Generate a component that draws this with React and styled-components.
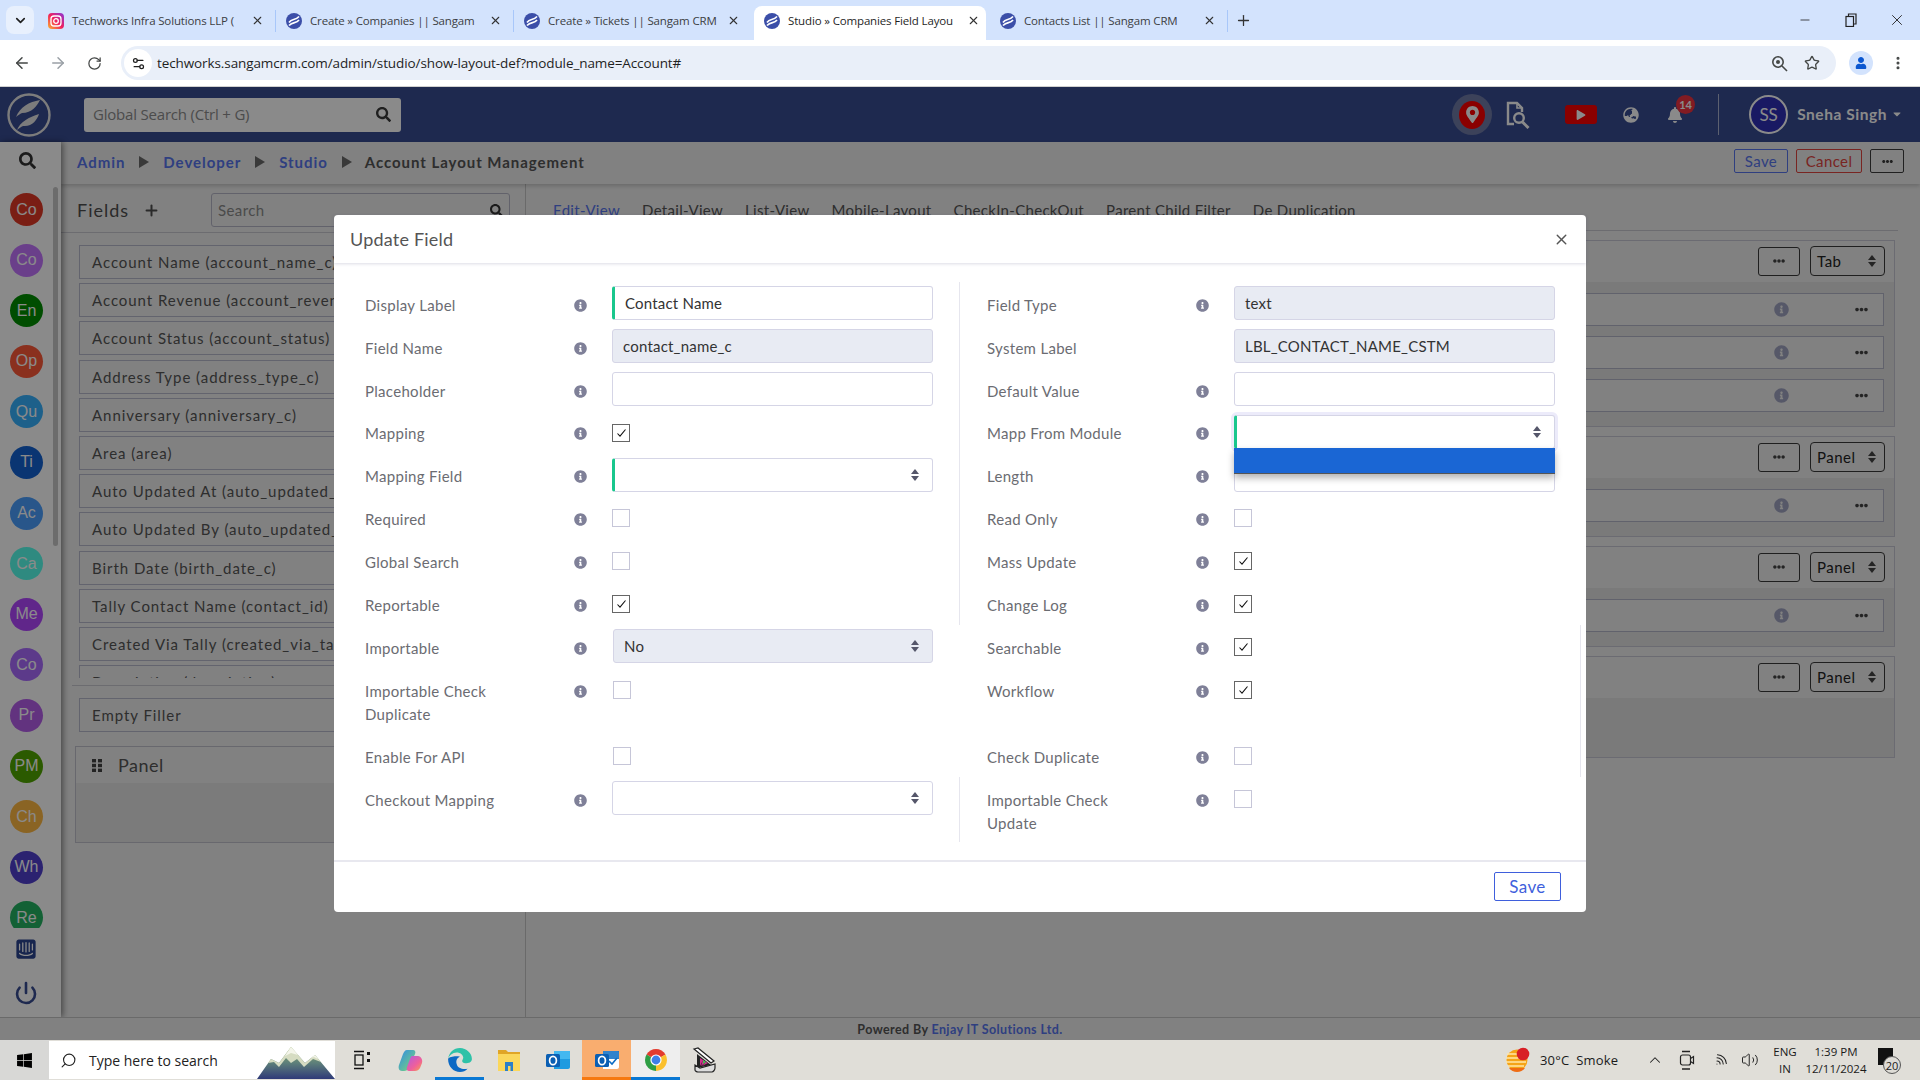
import React from 'react';
import styled, { createGlobalStyle } from 'styled-components';
import {
  ArrowLeft, ArrowRight, RotateCw, Star, Search, EllipsisVertical, Minus, X, Plus,
  ChevronDown, ChevronUp, Settings2, Power, Volume2, Wifi,
} from 'lucide-react';
import {
  FaUser, FaSearch, FaMapMarkerAlt, FaPlay, FaGlobeAsia, FaBell, FaEllipsisH, FaInfoCircle,
  FaIntercom, FaWindows, FaCaretDown,
} from 'react-icons/fa';

const GlobalStyle = createGlobalStyle`
  html, body {
    margin: 0;
    padding: 0;
    width: 1920px;
    height: 1080px;
    overflow: hidden;
    background: #fff;
  }
  * {
    box-sizing: border-box;
  }
`;

const uiFont = `'Open Sans', 'Noto Sans', sans-serif`;
const appFont = `Lato, 'Open Sans', sans-serif`;

const Screen = styled.div`
  width: 1920px;
  height: 1080px;
  display: flex;
  flex-direction: column;
`;

/* ---------- browser chrome ---------- */

const TabStrip = styled.div`
  height: 40px;
  flex: none;
  background: #d3e3fd;
  display: flex;
  align-items: flex-end;
  padding-left: 6px;
  font-family: ${uiFont};
`;

const TabListButton = styled.div`
  width: 28px;
  height: 28px;
  margin: 0 4px 6px 0;
  border-radius: 8px;
  background: #e8f0fd;
  color: #1f1f1f;
  display: flex;
  align-items: center;
  justify-content: center;
`;

const Tab = styled.div`
  width: ${(p) => (p.$active ? '232px' : '238px')};
  height: 34px;
  margin: ${(p) => (p.$active ? '0 4px 0 2px' : '0')};
  padding: 0 0 5px 10px;
  display: flex;
  align-items: center;
  background: ${(p) => (p.$active ? '#fff' : 'transparent')};
  border-radius: 8px 8px 0 0;
`;

const TabTitle = styled.span`
  margin-left: 8px;
  width: 168px;
  white-space: nowrap;
  font-size: 11.5px;
  letter-spacing: -0.15px;
  color: ${(p) => (p.$active ? '#1f1f1f' : '#3c4043')};
`;

const TabClose = styled.span`
  margin-left: 10px;
  width: 14px;
  display: flex;
  justify-content: center;
  color: #333;
`;

const TabSep = styled.span`
  margin-left: auto;
  width: 1px;
  height: 22px;
  background: ${(p) => (p.$hidden ? 'transparent' : '#a8c7fa')};
`;

const NewTab = styled.div`
  margin: 0 0 11px 7px;
  color: #333;
  display: flex;
`;

const WindowControls = styled.div`
  margin-left: auto;
  height: 40px;
  display: flex;
`;

const WindowButton = styled.div`
  width: 46px;
  display: flex;
  align-items: center;
  justify-content: center;
  color: #222;
`;

const AddressRow = styled.div`
  height: 47px;
  flex: none;
  background: #fff;
  border-bottom: 1px solid #d0d0d0;
  display: flex;
  align-items: center;
  padding: 0 14px 0 4px;
  font-family: ${uiFont};
`;

const NavButton = styled.div`
  width: 36px;
  display: flex;
  justify-content: center;
  color: ${(p) => (p.$muted ? '#9aa0a6' : '#444746')};
`;

const Omnibox = styled.div`
  width: 1715px;
  height: 34px;
  margin-left: 9px;
  padding: 0 16px 0 3px;
  border-radius: 17px;
  background: #e9eff9;
  display: flex;
  align-items: center;
  color: #1f1f1f;
`;

const SiteInfo = styled.div`
  width: 28px;
  height: 28px;
  border-radius: 50%;
  background: #fff;
  display: flex;
  align-items: center;
  justify-content: center;
`;

const Url = styled.span`
  margin-left: 5px;
  font-size: 13.5px;
  letter-spacing: -0.1px;
  color: #1f1f1f;
`;

const OmniIcons = styled.div`
  margin-left: auto;
  display: flex;
  align-items: center;
  gap: 16px;
  color: #444746;
`;

const Profile = styled.div`
  width: 24px;
  height: 24px;
  margin-left: 13px;
  border-radius: 50%;
  background: #d3e3fd;
  color: #0b57d0;
  display: flex;
  align-items: center;
  justify-content: center;
`;

const ChromeMenu = styled.div`
  margin-left: 17px;
  display: flex;
  color: #444746;
`;

/* ---------- app shell, all of it under the modal backdrop ---------- */

const Viewport = styled.div`
  flex: 1;
  min-height: 0;
  position: relative;
  display: flex;
  flex-direction: column;
  background: #eeeeee;
  font-family: ${appFont};
`;

const AppHeader = styled.header`
  height: 55px;
  flex: none;
  background: #384c92;
  display: flex;
  align-items: center;
  padding-left: 7px;
`;

const GlobalSearch = styled.div`
  width: 317px;
  height: 34px;
  margin-left: 33px;
  padding: 0 10px 1px 9px;
  border-radius: 3px;
  background: #fff;
  display: flex;
  align-items: center;
  justify-content: space-between;
  font-size: 15px;
  color: #8d8d8d;
  font-family: ${uiFont};
  letter-spacing: -0.2px;
  svg {
    color: #3a3a3a;
  }
`;

const HeaderRight = styled.div`
  margin-left: auto;
  display: flex;
  align-items: center;
  color: #fff;
`;

const PinHalo = styled.div`
  width: 40px;
  height: 41px;
  border-radius: 50%;
  background: #6f7aa6;
  display: flex;
  align-items: center;
  justify-content: center;
`;

const PinDisc = styled.div`
  width: 26px;
  height: 28px;
  border-radius: 50%;
  background: #ff0000;
  display: flex;
  align-items: center;
  justify-content: center;
`;

const HeaderIcon = styled.div`
  margin-left: ${(p) => p.$ml}px;
  position: relative;
  display: flex;
`;

const PlayButton = styled.div`
  width: 32px;
  height: 19px;
  margin-left: 35px;
  border-radius: 3px;
  background: #ff0000;
  display: flex;
  align-items: center;
  justify-content: center;
`;

const Badge = styled.span`
  position: absolute;
  top: -12px;
  left: 9px;
  width: 19px;
  height: 19px;
  border-radius: 50%;
  background: #f0323f;
  color: #fff;
  font-size: 11px;
  font-weight: 700;
  display: flex;
  align-items: center;
  justify-content: center;
`;

const HeaderDivider = styled.span`
  width: 1px;
  height: 41px;
  margin-left: 35px;
  background: #aab2d0;
`;

const UserAvatar = styled.div`
  width: 39px;
  height: 39px;
  margin-left: 30px;
  border-radius: 50%;
  border: 2px solid #fff;
  background: #2f2fb8;
  color: #fff;
  font-size: 17px;
  display: flex;
  align-items: center;
  justify-content: center;
`;

const UserName = styled.div`
  margin: 0 17px 1px 9px;
  display: flex;
  align-items: center;
  gap: 4px;
  font-size: 15.5px;
  font-weight: 700;
  letter-spacing: 0.55px;
  color: #fff;
`;

const Workspace = styled.div`
  flex: 1;
  min-height: 0;
  display: flex;
`;

const Sidebar = styled.aside`
  width: 61px;
  flex: none;
  position: relative;
  z-index: 2;
  background: #fff;
  box-shadow: 2px 0 6px rgba(0, 0, 0, 0.45);
  display: flex;
  flex-direction: column;
`;

const SideSearch = styled.div`
  height: 42px;
  flex: none;
  padding: 0 0 6px 19px;
  display: flex;
  align-items: center;
  color: #333;
`;

const AvatarList = styled.div`
  height: 744px;
  flex: none;
  overflow: hidden;
  padding: 9px 0 0 10px;
  display: flex;
  flex-direction: column;
  gap: 17.6px;
`;

const ScrollThumb = styled.span`
  position: absolute;
  left: 53px;
  top: 45px;
  width: 5px;
  height: 359px;
  border-radius: 3px;
  background: #c8c8c8;
`;

const Avatar = styled.div`
  width: 33px;
  height: 33px;
  flex: none;
  border-radius: 50%;
  background: ${(p) => p.$bg};
  color: #fff;
  font-family: 'Liberation Sans', sans-serif;
  font-size: 16px;
  display: flex;
  align-items: center;
  justify-content: center;
`;

const SideBottom = styled.div`
  display: flex;
  flex-direction: column;
  align-items: center;
  width: 52px;
  padding-top: 10px;
  gap: 21px;
  color: #384c92;
`;

const Main = styled.main`
  flex: 1;
  min-width: 0;
  display: flex;
  flex-direction: column;
`;

const Crumbs = styled.div`
  height: 42px;
  flex: none;
  padding: 0 16px 2px 16px;
  background: #eeeeee;
  box-shadow: 0 2px 4px rgba(0, 0, 0, 0.18);
  position: relative;
  z-index: 1;
  display: flex;
  align-items: center;
  font-size: 15px;
  font-weight: 700;
  letter-spacing: 0.95px;
`;

const CrumbLink = styled.span`
  color: #5775ed;
`;

const CrumbSep = styled.span`
  width: 0;
  height: 0;
  margin: 0 14px 0 14px;
  border-top: 6px solid transparent;
  border-bottom: 6px solid transparent;
  border-left: 10px solid #6a6a6a;
`;

const CrumbCurrent = styled.span`
  margin-left: -1px;
  color: #555;
`;

const TopActions = styled.div`
  margin: 0 0 2px auto;
  display: flex;
  gap: 8px;
`;

const TopButton = styled.div`
  height: 24px;
  width: ${(p) => p.$w}px;
  border: 1px solid ${(p) => p.$c};
  border-radius: 2px;
  color: ${(p) => p.$c};
  font-size: 15px;
  font-weight: 400;
  letter-spacing: 0.4px;
  display: flex;
  align-items: center;
  justify-content: center;
`;

const Studio = styled.div`
  flex: 1;
  min-height: 0;
  display: flex;
`;

const FieldsPane = styled.section`
  width: 465px;
  flex: none;
  border-right: 1px solid #c4c4c4;
  display: flex;
  flex-direction: column;
`;

const FieldsHead = styled.div`
  height: 49px;
  flex: none;
  padding: 4px 15px 0 16px;
  border-bottom: 1px solid #c8c8d0;
  display: flex;
  align-items: center;
  color: #4e4e4e;
`;

const FieldsTitle = styled.span`
  font-size: 18px;
  font-weight: 400;
  letter-spacing: 1px;
`;

const AddField = styled.span`
  margin-left: 14px;
  display: flex;
`;

const FieldSearch = styled.div`
  width: 299px;
  height: 34px;
  margin-left: auto;
  padding: 0 6px;
  border: 1px solid #b5b5c6;
  border-radius: 3px;
  display: flex;
  align-items: center;
  justify-content: space-between;
  font-size: 15px;
  letter-spacing: 0.4px;
  color: #8a8a8a;
  svg {
    color: #333;
  }
`;

const FieldList = styled.div`
  height: 433px;
  flex: none;
  margin: 12px 0 0 18px;
  overflow: hidden;
  display: flex;
  flex-direction: column;
  gap: 4.2px;
`;

const FieldItem = styled.div`
  height: 34px;
  width: 430px;
  flex: none;
  padding-left: 12px;
  border: 1px solid #b8bacb;
  display: flex;
  align-items: center;
  font-size: 15px;
  letter-spacing: 0.95px;
  white-space: nowrap;
  color: #555;
`;

const FillerBlock = styled.div`
  margin: 7px 16px 0 11px;
  padding: 12px 0 0 7px;
  border-top: 1px solid #c8c8d0;
`;

const PanelDraft = styled.div`
  height: 97px;
  margin: 14px 16px 0 14px;
  border: 1px solid #c0c0cc;
  background: #e4e4e4;
  display: flex;
  flex-direction: column;
`;

const PanelDraftHead = styled.div`
  height: 36px;
  flex: none;
  padding-left: 16px;
  background: #eeeeee;
  display: flex;
  align-items: center;
  gap: 16px;
  font-size: 18px;
  letter-spacing: 0.5px;
  color: #555;
`;

const ViewArea = styled.section`
  flex: 1;
  min-width: 0;
  display: flex;
  flex-direction: column;
`;

const ViewTabs = styled.nav`
  height: 47px;
  flex: none;
  margin-right: 22px;
  padding: 17px 0 0 27px;
  border-bottom: 1px solid #c8c8d0;
  display: flex;
  font-size: 15px;
  letter-spacing: 0.31px;
  color: #555;
`;

const ViewTab = styled.span`
  height: 24px;
  margin-right: ${(p) => p.$mr}px;
  color: ${(p) => (p.$active ? '#5775ed' : '#555')};
`;

const PanelStack = styled.div`
  margin: 9px 25px 0 14px;
  display: flex;
  flex-direction: column;
  gap: 9px;
`;

const LayoutPanel = styled.div`
  border: 1px solid #c6c6d2;
  background: #e2e2e2;
  padding-bottom: ${(p) => p.$pb}px;
  min-height: ${(p) => p.$min || 0}px;
`;

const LayoutHead = styled.div`
  height: 41px;
  padding: 0 9px 1px 0;
  background: #eeeeee;
  display: flex;
  align-items: center;
  justify-content: flex-end;
  gap: 10px;
`;

const GhostButton = styled.div`
  width: 42px;
  height: 29px;
  border: 1px solid #3a3a3a;
  border-radius: 3px;
  color: #444;
  display: flex;
  align-items: center;
  justify-content: center;
`;

const PanelSelect = styled.div`
  width: 75px;
  height: 30px;
  padding: 0 8px 0 6px;
  border: 1px solid #3a3a3a;
  border-radius: 4px;
  font-size: 15px;
  letter-spacing: 0.5px;
  color: #222;
  display: flex;
  align-items: center;
  justify-content: space-between;
`;

const RowStack = styled.div`
  margin: 11px 10px 0 10px;
  display: flex;
  flex-direction: column;
  gap: 10px;
`;

const LayoutRow = styled.div`
  height: 33px;
  padding-right: 15px;
  border: 1px solid #b4b6c8;
  background: #eeeeee;
  display: flex;
  align-items: center;
  justify-content: flex-end;
  gap: 66px;
  color: #9fa3c0;
  .dots {
    color: #444;
  }
`;

const AppFooter = styled.footer`
  height: 23px;
  flex: none;
  border-top: 1px solid #c4c4c4;
  background: #eeeeee;
  display: flex;
  align-items: center;
  justify-content: center;
  font-size: 12.5px;
  font-weight: 700;
  letter-spacing: 0.4px;
  color: #555;
  position: relative;
  z-index: 3;
  span {
    color: #5775ed;
    margin-left: 3px;
  }
`;

/* ---------- modal ---------- */

const Backdrop = styled.div`
  position: absolute;
  inset: 0;
  z-index: 10;
  background: rgba(0, 0, 0, 0.46);
  display: flex;
  justify-content: center;
  padding-top: 128px;
`;

const Modal = styled.div`
  width: 1252px;
  height: 697px;
  border-radius: 4px;
  background: #fff;
  display: flex;
  flex-direction: column;
`;

const ModalHead = styled.div`
  height: 48px;
  flex: none;
  padding: 0 16px 0 16px;
  box-shadow: 0 1px 3px rgba(60, 60, 110, 0.18);
  display: flex;
  align-items: center;
  justify-content: space-between;
  font-size: 18px;
  letter-spacing: 0.2px;
  color: #555;
  svg {
    color: #555;
  }
`;

const FormGrid = styled.div`
  margin: 19px 0 0 3px;
  display: grid;
  grid-template-columns: 622px 622px;
  grid-template-rows: repeat(4, 43px) 42px repeat(4, 43px) 66px 43px 65px;
`;

const Cell = styled.div`
  padding: 0 25px 0 27px;
  border-left: 1px solid ${(p) => (p.$line === 'left' ? '#e6e6ee' : 'transparent')};
  border-right: 1px solid ${(p) => (p.$line === 'right' ? '#e6e6ee' : 'transparent')};
  display: grid;
  grid-template-columns: 209px 38px 321px;
  align-items: start;
`;

const Label = styled.label`
  padding: ${(p) => (p.$up ? '11px' : '12px')} 40px 0 0;
  font-size: 15px;
  line-height: 23px;
  letter-spacing: 0.3px;
  color: #6b6c72;
`;

const InfoSlot = styled.span`
  margin-top: ${(p) => (p.$up ? '16px' : '17px')};
  display: flex;
  color: #7f8098;
`;

const Field = styled.div`
  height: 34px;
  margin: 4px 0 0 ${(p) => (p.$nudge ? '1px' : '0')};
  padding: 0 13px 0 10px;
  border: 1px solid #d5d5e6;
  border-left: ${(p) => (p.$accent ? '3px solid #19c78d' : '1px solid #d5d5e6')};
  border-radius: 3px;
  background: ${(p) => (p.$disabled ? '#e8ebf3' : '#fff')};
  font-size: 15px;
  letter-spacing: 0.2px;
  color: #333;
  display: flex;
  align-items: center;
  position: relative;
  box-shadow: ${(p) => (p.$focused ? '0 0 0 3px #ecebfa' : 'none')};
`;

const Arrows = styled.span`
  margin-left: auto;
  display: flex;
  flex-direction: column;
  gap: 2px;
  &::before,
  &::after {
    content: '';
    width: 0;
    height: 0;
    border-left: 4.5px solid transparent;
    border-right: 4.5px solid transparent;
  }
  &::before {
    border-bottom: 5px solid ${(p) => p.$c || '#55566a'};
  }
  &::after {
    border-top: 5px solid ${(p) => p.$c || '#55566a'};
  }
`;

const OptionList = styled.div`
  position: absolute;
  left: -3px;
  right: -1px;
  top: 32px;
  height: 26px;
  z-index: 2;
  background: #1a66d4;
  border-bottom: 1px solid #555;
  box-shadow: 0 4px 7px rgba(0, 0, 0, 0.3);
`;

const Check = styled.span`
  width: 18px;
  height: 18px;
  margin: 13px 0 0 ${(p) => (p.$nudge ? '1px' : '0')};
  border: 1px solid ${(p) => (p.$on ? '#666' : '#c6c6d8')};
  background: #fff;
  display: flex;
  align-items: center;
  justify-content: center;
  color: #111;
`;

const ModalFoot = styled.div`
  margin-top: 18px;
  flex: 1;
  border-top: 2px solid #e8e8ef;
  padding: 10px 25px 0 0;
  display: flex;
  justify-content: flex-end;
  align-items: flex-start;
`;

const SaveButton = styled.div`
  width: 67px;
  height: 29px;
  border: 1px solid #3f5fdc;
  border-radius: 2px;
  color: #3f5fdc;
  font-size: 17px;
  letter-spacing: 0.4px;
  display: flex;
  align-items: center;
  justify-content: center;
`;

/* ---------- taskbar ---------- */

const Taskbar = styled.div`
  height: 40px;
  flex: none;
  background: #e0ded8;
  display: flex;
  font-family: ${uiFont};
  color: #1a1a1a;
`;

const StartButton = styled.div`
  width: 49px;
  padding-left: 16px;
  background: #d8d8d6;
  display: flex;
  align-items: center;
`;

const SearchBox = styled.div`
  width: 286px;
  margin: 1px 0;
  padding-left: 11px;
  background: #fff;
  display: flex;
  align-items: center;
  font-size: 14px;
  color: #222;
  position: relative;
  overflow: hidden;
  svg.glass {
    transform: scaleX(-1);
    margin-right: 12px;
  }
`;

const Peaks = styled.svg`
  position: absolute;
  right: 0;
  bottom: 0;
`;

const TaskApps = styled.div`
  margin-left: 2px;
  display: flex;
`;

const TaskItem = styled.div`
  width: 49px;
  display: flex;
  align-items: center;
  justify-content: center;
  background: ${(p) => p.$bg || 'transparent'};
  border-bottom: 3px solid ${(p) => p.$line || 'transparent'};
  border-top: 3px solid transparent;
`;

const Tray = styled.div`
  margin-left: auto;
  width: 414px;
  display: flex;
  align-items: center;
  font-size: 13px;
`;

const TrayIcon = styled.div`
  width: ${(p) => p.$w || 30}px;
  margin-left: ${(p) => p.$ml || 0}px;
  display: flex;
  justify-content: center;
  color: #222;
`;

const Weather = styled.span`
  width: 80px;
  margin-left: 10px;
  white-space: nowrap;
  letter-spacing: 0.15px;
`;

const TrayStack = styled.div`
  width: ${(p) => p.$w}px;
  margin-left: ${(p) => p.$ml}px;
  display: flex;
  flex-direction: column;
  align-items: center;
  gap: 1px;
  font-size: 11.5px;
  line-height: 16px;
  white-space: nowrap;
`;

const Notify = styled.div`
  margin-left: 7px;
  position: relative;
  width: 24px;
  height: 26px;
`;

const NotifyBubble = styled.span`
  position: absolute;
  left: 2px;
  top: 1px;
  width: 15px;
  height: 17px;
  background: #111;
`;

const NotifyCount = styled.span`
  position: absolute;
  left: 7px;
  top: 9px;
  width: 18px;
  height: 18px;
  border-radius: 50%;
  border: 1px solid #555;
  background: #dedcd6;
  font-size: 11px;
  display: flex;
  align-items: center;
  justify-content: center;
`;

/* ---------- drawings ---------- */

const SangamIcon = () => (
  <svg width="16" height="16" viewBox="0 0 16 16">
    <circle cx="8" cy="8" r="8" fill="#3b4ea8" />
    <path d="M3 9.5C6 5 9 8 13 3.5M3 12.5C7 8 10 11 13 7" stroke="#fff" strokeWidth="1.7" fill="none" />
  </svg>
);

const InstaIcon = () => (
  <svg width="16" height="16" viewBox="0 0 16 16">
    <defs>
      <linearGradient id="ig" x1="0" y1="1" x2="1" y2="0">
        <stop offset="0" stopColor="#fdb42d" />
        <stop offset="0.5" stopColor="#f0205f" />
        <stop offset="1" stopColor="#8a36d8" />
      </linearGradient>
    </defs>
    <rect width="16" height="16" rx="4" fill="url(#ig)" />
    <rect x="3" y="3" width="10" height="10" rx="3" fill="none" stroke="#fff" strokeWidth="1.3" />
    <circle cx="8" cy="8" r="2.3" fill="none" stroke="#fff" strokeWidth="1.3" />
  </svg>
);

const RestoreIcon = () => (
  <svg width="12" height="14" viewBox="0 0 12 14" fill="none" stroke="#222" strokeWidth="1.2">
    <rect x="1" y="3.5" width="7.5" height="10" />
    <path d="M3.5 3.5V1H11V11H8.5" />
  </svg>
);

const ZoomLens = () => (
  <svg width="17" height="17" viewBox="0 0 17 17" fill="none" stroke="currentColor" strokeWidth="1.6">
    <circle cx="7" cy="7" r="5.2" />
    <circle cx="7" cy="7" r="2" fill="currentColor" stroke="none" />
    <path d="M11 11l5 5" />
  </svg>
);

const AppLogo = () => (
  <svg width="44" height="44" viewBox="0 0 44 44">
    <circle cx="22" cy="22" r="20.5" fill="none" stroke="#e6e6e6" strokeWidth="2.4" />
    <path d="M9 24C13 14 22 9 33 7 30 13 25 20 15 20 13 21 11 22 9 24z" fill="#e6e6e6" />
    <path d="M10 37C13 29 22 24 32 21 30 27 25 34 16 33 14 34 12 35 10 37z" fill="#e6e6e6" />
  </svg>
);

const DocSearchIcon = () => (
  <svg width="24" height="28" viewBox="0 0 24 28" fill="none" stroke="#fff" strokeWidth="2.4">
    <path d="M8 23H2V2h9l5 5v4" />
    <path d="M11 2v5h5" strokeWidth="1.6" />
    <circle cx="13" cy="17" r="4.8" />
    <path d="M16.5 21l6 6" strokeWidth="3" />
  </svg>
);

const GripDots = () => (
  <svg width="10" height="13" viewBox="0 0 10 13" fill="#444">
    <rect width="4" height="3.4" />
    <rect x="6" width="4" height="3.4" />
    <rect y="4.8" width="4" height="3.4" />
    <rect x="6" y="4.8" width="4" height="3.4" />
    <rect y="9.6" width="4" height="3.4" />
    <rect x="6" y="9.6" width="4" height="3.4" />
  </svg>
);

const TickMark = () => (
  <svg width="11" height="10" viewBox="0 0 11 10" fill="none" stroke="#111" strokeWidth="1.1">
    <path d="M1.5 5.5L4 8.2 9.5 1.5" />
  </svg>
);

const MountainArt = () => (
  <Peaks width="78" height="33" viewBox="0 0 78 33">
    <defs>
      <linearGradient id="peakBody" x1="0" y1="0" x2="0" y2="1">
        <stop offset="0" stopColor="#8fae6a" />
        <stop offset="0.5" stopColor="#5d7f7a" />
        <stop offset="1" stopColor="#2f3a78" />
      </linearGradient>
    </defs>
    <path d="M0 33L14 13 22 17 34 1 48 17 58 9 78 33z" fill="url(#peakBody)" />
    <path d="M11 17L14 13 22 17 34 1 48 17 58 9 64 16 56 13 47 21 40 13 34 17 29 12 22 21 17 16z" fill="#d6dcc2" />
    <path d="M28 10L34 1 41 9 34 7zM54 12L58 9 61 13 57 11z" fill="#f4f5ea" />
  </Peaks>
);

const TaskViewIcon = () => (
  <svg width="16" height="20" viewBox="0 0 16 20" fill="none" stroke="#111" strokeWidth="1.3">
    <path d="M0 1.5H10M0 18.5H10" />
    <rect x="1" y="5" width="8" height="10" />
    <rect x="13" y="2" width="3" height="3" fill="#111" stroke="none" />
    <rect x="13" y="9" width="3" height="3" fill="#111" stroke="none" />
  </svg>
);

const CopilotIcon = () => (
  <svg width="25" height="25" viewBox="0 0 25 25">
    <defs>
      <linearGradient id="cp1" x1="0" y1="0" x2="1" y2="1">
        <stop offset="0" stopColor="#2f8be8" />
        <stop offset="1" stopColor="#7fdc6f" />
      </linearGradient>
      <linearGradient id="cp2" x1="0" y1="0" x2="1" y2="1">
        <stop offset="0" stopColor="#b05be0" />
        <stop offset="0.6" stopColor="#f0609a" />
        <stop offset="1" stopColor="#f5a54a" />
      </linearGradient>
    </defs>
    <path d="M9 2h6c2 0 3 2 2 4l-6 13c-1 3-3 4-5 4H4c-3 0-4-3-3-6L5 6c1-2 2-4 4-4z" fill="url(#cp1)" />
    <path d="M14 8h6c3 0 5 4 4 7l-2 5c-1 2-3 3-5 3h-6c-2 0-3-2-2-4l3-8c1-2 1-3 2-3z" fill="url(#cp2)" />
  </svg>
);

const EdgeIcon = () => (
  <svg width="26" height="26" viewBox="0 0 24 24">
    <path d="M1 11C2 5 6 1 12 1c6 0 11 5 11 10 0 3-3 4-6 4-2 0-3-1-3-2 0-1 1-2 1-3 0-3-3-5-6-5-4 0-7 3-8 6z" fill="#2fc2a8" />
    <path d="M1 11c0 7 5 12 11 12 3 0 5-1 7-3-4 1-9 0-10-4-1-3 0-6 3-7-4-1-10 0-11 2z" fill="#0c69c4" />
  </svg>
);

const FolderIcon = () => (
  <svg width="22" height="22" viewBox="0 0 22 22">
    <path d="M0 1h8l2 2h12v4H0z" fill="#e0a526" />
    <rect y="5" width="22" height="17" fill="#fbd75b" />
    <rect x="7" y="13" width="8" height="9" fill="#2b7fc9" />
    <rect x="10" y="17" width="2.5" height="5" fill="#fbd75b" />
  </svg>
);

const OutlookIcon = ({ check }) => (
  <svg width="26" height="26" viewBox="0 0 26 26">
    <path d="M9 4h14c1 0 2 1 2 2v14c0 1-1 2-2 2H9z" fill={check ? '#fff' : '#1e9be0'} />
    <path d="M9 4h16v8H9z" fill={check ? '#0d6dc4' : '#43b8f0'} opacity={check ? 0.85 : 1} />
    {check && <path d="M15 14l3 3 5-6" stroke="#0d6dc4" strokeWidth="1.6" fill="none" />}
    <rect x="1" y="7" width="14" height="13" rx="1.5" fill="#0b5fb3" />
    <ellipse cx="8" cy="13.5" rx="3.4" ry="4.2" fill="none" stroke="#fff" strokeWidth="1.7" />
  </svg>
);

const ChromeIcon = () => (
  <svg width="24" height="24" viewBox="0 0 24 24">
    <path d="M12 12L21.5 6.5A11 11 0 0 0 2.5 6.5Z" fill="#e33b2e" />
    <path d="M12 12L21.5 6.5A11 11 0 0 1 12 23Z" fill="#fbc02d" />
    <path d="M12 12L12 23A11 11 0 0 1 2.5 6.5Z" fill="#2f9e44" />
    <circle cx="12" cy="12" r="5.6" fill="#fff" />
    <circle cx="12" cy="12" r="4.4" fill="#3f7fe8" />
  </svg>
);

const ScannerIcon = () => (
  <svg width="26" height="26" viewBox="0 0 26 26">
    <path d="M2 2l4-1 16 13-3 2z" fill="#fff" stroke="#222" strokeWidth="1.2" />
    <path d="M5 7l14 11-14 3z" fill="#222" />
    <path d="M8 11l3 2-3 6zM11 13l3 2-5 4zM14 15l2 1-6 3z" fill="#d02f8f" />
    <path d="M11 13l3 2-3 2z" fill="#3fbf4f" />
    <path d="M3 18v5c0 1 2 2 3 2h14c1 0 3-2 3-4v-4L8 21z" fill="#ddd" stroke="#222" strokeWidth="1.2" />
  </svg>
);

const WeatherIcon = () => (
  <svg width="24" height="26" viewBox="0 0 24 26">
    <circle cx="11" cy="13" r="10.5" fill="#f5a418" />
    <path d="M1 7h17M0 11h16M0 15h20M2 19h16" stroke="#ffe6a6" strokeWidth="1.6" />
    <path d="M3 21h16a10 10 0 0 1-16 0z" fill="#ef6c14" />
    <circle cx="17" cy="7" r="6.3" fill="#d81f26" />
  </svg>
);

const MeetIcon = () => (
  <svg width="18" height="22" viewBox="0 0 18 22" fill="none" stroke="#222" strokeWidth="1.2">
    <path d="M4 2.5h8M4 20h8" strokeWidth="1.6" />
    <rect x="2.5" y="6" width="10" height="10" rx="2" />
    <path d="M12.5 9.5l3-2v7l-3-2" />
  </svg>
);

/* ---------- data ---------- */

const tabs = [
  { title: 'Techworks Infra Solutions LLP (', icon: <InstaIcon /> },
  { title: 'Create » Companies || Sangam', icon: <SangamIcon /> },
  { title: 'Create » Tickets || Sangam CRM', icon: <SangamIcon />, noSep: true },
  { title: 'Studio » Companies Field Layou', icon: <SangamIcon />, active: true, noSep: true },
  { title: 'Contacts List || Sangam CRM', icon: <SangamIcon /> },
];

const modules = [
  ['Co', '#e23925'], ['Co', '#c475ff'], ['En', '#008f00'], ['Op', '#ff5939'], ['Qu', '#36b2ff'],
  ['Ti', '#1362d3'], ['Ac', '#4a9fff'], ['Ca', '#57ffed'], ['Me', '#b246ff'], ['Co', '#aa6bff'],
  ['Pr', '#b55eeb'], ['PM', '#51a700'], ['Ch', '#ffb943'], ['Wh', '#503fcf'], ['Re', '#23b462'],
];

const fieldNames = [
  'Account Name (account_name_c)',
  'Account Revenue (account_revenue_c)',
  'Account Status (account_status)',
  'Address Type (address_type_c)',
  'Anniversary (anniversary_c)',
  'Area (area)',
  'Auto Updated At (auto_updated_at)',
  'Auto Updated By (auto_updated_by)',
  'Birth Date (birth_date_c)',
  'Tally Contact Name (contact_id)',
  'Created Via Tally (created_via_tally)',
  'Description (description)',
];

const viewTabs = [
  ['Edit-View', 22, true], ['Detail-View', 22], ['List-View', 22], ['Mobile-Layout', 22],
  ['CheckIn-CheckOut', 22], ['Parent Child Filter', 22], ['De Duplication', 0],
];

const layoutPanels = [
  { type: 'Tab', rows: 3, pb: 14 },
  { type: 'Panel', rows: 1, pb: 14 },
  { type: 'Panel', rows: 1, pb: 14 },
  { type: 'Panel', rows: 0, pb: 0, min: 102 },
];

const formRows = [
  [
    { label: 'Display Label', kind: 'input', value: 'Contact Name', accent: true },
    { label: 'Field Type', kind: 'input', value: 'text', disabled: true, line: 'left' },
  ],
  [
    { label: 'Field Name', kind: 'input', value: 'contact_name_c', disabled: true },
    { label: 'System Label', kind: 'input', value: 'LBL_CONTACT_NAME_CSTM', disabled: true, noInfo: true, line: 'left' },
  ],
  [
    { label: 'Placeholder', kind: 'input' },
    { label: 'Default Value', kind: 'input', line: 'left' },
  ],
  [
    { label: 'Mapping', kind: 'check', on: true, up: true },
    { label: 'Mapp From Module', kind: 'select', accent: true, open: true, line: 'left', up: true },
  ],
  [
    { label: 'Mapping Field', kind: 'select', accent: true, up: true },
    { label: 'Length', kind: 'input', line: 'left', up: true },
  ],
  [
    { label: 'Required', kind: 'check' },
    { label: 'Read Only', kind: 'check', line: 'left' },
  ],
  [
    { label: 'Global Search', kind: 'check' },
    { label: 'Mass Update', kind: 'check', on: true, line: 'left' },
  ],
  [
    { label: 'Reportable', kind: 'check', on: true },
    { label: 'Change Log', kind: 'check', on: true, line: 'left' },
  ],
  [
    { label: 'Importable', kind: 'select', value: 'No', disabled: true, nudge: true },
    { label: 'Searchable', kind: 'check', on: true, line: 'right' },
  ],
  [
    { label: 'Importable Check Duplicate', kind: 'check', nudge: true },
    { label: 'Workflow', kind: 'check', on: true, line: 'right' },
  ],
  [
    { label: 'Enable For API', kind: 'check', noInfo: true, nudge: true },
    { label: 'Check Duplicate', kind: 'check', line: 'right' },
  ],
  [
    { label: 'Checkout Mapping', kind: 'select' },
    { label: 'Importable Check Update', kind: 'check', line: 'left' },
  ],
];

/* ---------- parts ---------- */

function BrowserChrome() {
  return (
    <>
      <TabStrip>
        <TabListButton><ChevronDown size={15} strokeWidth={2.6} /></TabListButton>
        {tabs.map((t) => (
          <Tab key={t.title} $active={t.active}>
            {t.icon}
            <TabTitle $active={t.active}>{t.title}</TabTitle>
            <TabClose><X size={13} strokeWidth={2} /></TabClose>
            <TabSep $hidden={t.noSep} />
          </Tab>
        ))}
        <NewTab><Plus size={17} strokeWidth={1.8} /></NewTab>
        <WindowControls>
          <WindowButton><Minus size={14} strokeWidth={1.4} /></WindowButton>
          <WindowButton><RestoreIcon /></WindowButton>
          <WindowButton><X size={18} strokeWidth={1.2} /></WindowButton>
        </WindowControls>
      </TabStrip>
      <AddressRow>
        <NavButton><ArrowLeft size={18} strokeWidth={2} /></NavButton>
        <NavButton $muted><ArrowRight size={18} strokeWidth={2} /></NavButton>
        <NavButton><RotateCw size={15} strokeWidth={2} /></NavButton>
        <Omnibox>
          <SiteInfo><Settings2 size={15} strokeWidth={2} /></SiteInfo>
          <Url>techworks.sangamcrm.com/admin/studio/show-layout-def?module_name=Account#</Url>
          <OmniIcons>
            <ZoomLens />
            <Star size={16} strokeWidth={2} />
          </OmniIcons>
        </Omnibox>
        <Profile><FaUser size={12} /></Profile>
        <ChromeMenu><EllipsisVertical size={16} strokeWidth={2.6} /></ChromeMenu>
      </AddressRow>
    </>
  );
}

function HeaderBar() {
  return (
    <AppHeader>
      <AppLogo />
      <GlobalSearch>
        Global Search (Ctrl + G)
        <FaSearch size={15} />
      </GlobalSearch>
      <HeaderRight>
        <PinHalo>
          <PinDisc><FaMapMarkerAlt size={17} color="#fff" /></PinDisc>
        </PinHalo>
        <HeaderIcon $ml={14}><DocSearchIcon /></HeaderIcon>
        <PlayButton><FaPlay size={10} color="#fff" /></PlayButton>
        <HeaderIcon $ml={26}><FaGlobeAsia size={16} /></HeaderIcon>
        <HeaderIcon $ml={28}>
          <FaBell size={16} />
          <Badge>14</Badge>
        </HeaderIcon>
        <HeaderDivider />
        <UserAvatar>SS</UserAvatar>
        <UserName>
          Sneha Singh
          <FaCaretDown size={12} />
        </UserName>
      </HeaderRight>
    </AppHeader>
  );
}

function SideRail() {
  return (
    <Sidebar>
      <SideSearch><FaSearch size={17} /></SideSearch>
      <ScrollThumb />
      <AvatarList>
        {modules.map(([name, color], i) => (
          <Avatar key={name + i} $bg={color}>{name}</Avatar>
        ))}
      </AvatarList>
      <SideBottom>
        <FaIntercom size={22} color="#2c4590" />
        <Power size={24} strokeWidth={2.6} />
      </SideBottom>
    </Sidebar>
  );
}

function FieldsColumn() {
  return (
    <FieldsPane>
      <FieldsHead>
        <FieldsTitle>Fields</FieldsTitle>
        <AddField><Plus size={17} strokeWidth={2.8} /></AddField>
        <FieldSearch>
          Search
          <FaSearch size={13} />
        </FieldSearch>
      </FieldsHead>
      <FieldList>
        {fieldNames.map((name) => <FieldItem key={name}>{name}</FieldItem>)}
      </FieldList>
      <FillerBlock>
        <FieldItem>Empty Filler</FieldItem>
      </FillerBlock>
      <PanelDraft>
        <PanelDraftHead><GripDots />Panel</PanelDraftHead>
      </PanelDraft>
    </FieldsPane>
  );
}

function LayoutColumn() {
  return (
    <ViewArea>
      <ViewTabs>
        {viewTabs.map(([name, mr, active]) => (
          <ViewTab key={name} $mr={mr} $active={active}>{name}</ViewTab>
        ))}
      </ViewTabs>
      <PanelStack>
        {layoutPanels.map((panel, i) => (
          <LayoutPanel key={i} $pb={panel.pb} $min={panel.min}>
            <LayoutHead>
              <GhostButton><FaEllipsisH size={12} /></GhostButton>
              <PanelSelect>
                {panel.type}
                <Arrows $c="#444" />
              </PanelSelect>
            </LayoutHead>
            {panel.rows > 0 && (
              <RowStack>
                {Array.from({ length: panel.rows }).map((_, r) => (
                  <LayoutRow key={r}>
                    <FaInfoCircle size={15} />
                    <FaEllipsisH size={13} className="dots" />
                  </LayoutRow>
                ))}
              </RowStack>
            )}
          </LayoutPanel>
        ))}
      </PanelStack>
    </ViewArea>
  );
}

function FormControl({ item }) {
  if (item.kind === 'check') {
    return <Check $on={item.on} $nudge={item.nudge}>{item.on && <TickMark />}</Check>;
  }
  return (
    <Field $accent={item.accent} $disabled={item.disabled} $focused={item.open} $nudge={item.nudge}>
      {item.value || ''}
      {item.kind === 'select' && <Arrows />}
      {item.open && <OptionList />}
    </Field>
  );
}

function UpdateFieldModal() {
  return (
    <Backdrop>
      <Modal>
        <ModalHead>
          Update Field
          <X size={17} strokeWidth={2} />
        </ModalHead>
        <FormGrid>
          {formRows.flat().map((item) => (
            <Cell key={item.label} $line={item.line}>
              <Label $up={item.up}>{item.label}</Label>
              <InfoSlot $up={item.up}>{!item.noInfo && <FaInfoCircle size={13} />}</InfoSlot>
              <FormControl item={item} />
            </Cell>
          ))}
        </FormGrid>
        <ModalFoot>
          <SaveButton>Save</SaveButton>
        </ModalFoot>
      </Modal>
    </Backdrop>
  );
}

function WindowsTaskbar() {
  return (
    <Taskbar>
      <StartButton><FaWindows size={17} color="#000" /></StartButton>
      <SearchBox>
        <Search className="glass" size={17} strokeWidth={1.6} />
        Type here to search
        <MountainArt />
      </SearchBox>
      <TaskApps>
        <TaskItem><TaskViewIcon /></TaskItem>
        <TaskItem><CopilotIcon /></TaskItem>
        <TaskItem $line="#0a78d4"><EdgeIcon /></TaskItem>
        <TaskItem><FolderIcon /></TaskItem>
        <TaskItem><OutlookIcon /></TaskItem>
        <TaskItem $bg="#f9ad6f" $line="#f6780f"><OutlookIcon check /></TaskItem>
        <TaskItem $bg="#eeeeee" $line="#0a78d4"><ChromeIcon /></TaskItem>
        <TaskItem><ScannerIcon /></TaskItem>
      </TaskApps>
      <Tray>
        <TrayIcon $w={24}><WeatherIcon /></TrayIcon>
        <Weather>30°C&nbsp;&nbsp;Smoke</Weather>
        <TrayIcon $ml={20}><ChevronUp size={18} strokeWidth={1.4} /></TrayIcon>
        <TrayIcon $ml={2}><MeetIcon /></TrayIcon>
        <TrayIcon $ml={3}><Wifi size={15} strokeWidth={1.7} style={{ transform: 'rotate(45deg)' }} /></TrayIcon>
        <TrayIcon><Volume2 size={18} strokeWidth={1.3} /></TrayIcon>
        <TrayStack $w={30} $ml={5}><span>ENG</span><span>IN</span></TrayStack>
        <TrayStack $w={66} $ml={3}><span>1:39 PM</span><span>12/11/2024</span></TrayStack>
        <Notify>
          <NotifyBubble />
          <NotifyCount>20</NotifyCount>
        </Notify>
      </Tray>
    </Taskbar>
  );
}

export default function App() {
  return (
    <Screen>
      <GlobalStyle />
      <BrowserChrome />
      <Viewport>
        <HeaderBar />
        <Workspace>
          <SideRail />
          <Main>
            <Crumbs>
              <CrumbLink>Admin</CrumbLink>
              <CrumbSep />
              <CrumbLink>Developer</CrumbLink>
              <CrumbSep />
              <CrumbLink>Studio</CrumbLink>
              <CrumbSep />
              <CrumbCurrent>Account Layout Management</CrumbCurrent>
              <TopActions>
                <TopButton $w={54} $c="#5775ed">Save</TopButton>
                <TopButton $w={66} $c="#e0453f">Cancel</TopButton>
                <TopButton $w={34} $c="#3c3c3c"><FaEllipsisH size={11} /></TopButton>
              </TopActions>
            </Crumbs>
            <Studio>
              <FieldsColumn />
              <LayoutColumn />
            </Studio>
          </Main>
        </Workspace>
        <AppFooter>
          Powered By <span>Enjay IT Solutions Ltd.</span>
        </AppFooter>
        <UpdateFieldModal />
      </Viewport>
      <WindowsTaskbar />
    </Screen>
  );
}
